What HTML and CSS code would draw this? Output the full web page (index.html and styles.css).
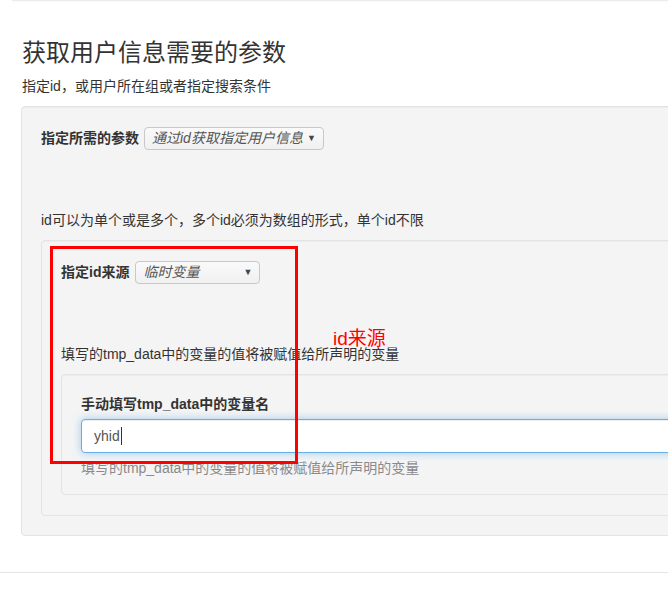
FILE: index.html
```html
<!DOCTYPE html>
<html lang="zh">
<head>
<meta charset="utf-8">
<link rel="stylesheet" href="styles.css">
</head>
<body>
<div class="topline"></div>
<div class="page">
  <h3 class="title">获取用户信息需要的参数</h3>
  <p class="subtitle">指定id，或用户所在组或者指定搜索条件</p>
  <div class="well">
    <div class="row-inline">
      <span class="lbl">指定所需的参数</span>
      <span class="select sel1"><span class="sel-text">通过id获取指定用户信息</span><span class="arrow">▼</span></span>
    </div>
    <p class="desc">id可以为单个或是多个，多个id必须为数组的形式，单个id不限</p>
    <div class="well well-mid">
      <div class="row-inline">
        <span class="lbl">指定id来源</span>
        <span class="select sel2"><span class="sel-text">临时变量</span><span class="arrow">▼</span></span>
      </div>
      <p class="desc">填写的tmp_data中的变量的值将被赋值给所声明的变量</p>
      <div class="well well-last">
        <div class="lbl block">手动填写tmp_data中的变量名</div>
        <div class="input"><span>yhid</span><span class="caret"></span></div>
        <div class="help">填写的tmp_data中的变量的值将被赋值给所声明的变量</div>
      </div>
    </div>
  </div>
</div>
<hr class="bottom-rule">
<div class="annot-box"></div>
<div class="annot-text">id来源</div>
</body>
</html>
```
FILE: styles.css
```css
html, body {
  margin: 0;
  padding: 0;
  background: #fff;
  overflow: hidden;
}
body {
  width: 668px;
  height: 597px;
  position: relative;
  font-family: "Liberation Sans", Arial, "Noto Sans CJK SC", sans-serif;
  font-size: 14px;
  line-height: 20px;
  color: #333;
}
.topline {
  height: 1px;
  margin-left: 12px;
  background: #ececec;
  box-shadow: 0 1px 2px rgba(0,0,0,0.04);
}
.page {
  width: 760px;
  padding-left: 21px;
  padding-top: 39px;
}
.title {
  margin: 0 0 10px 1px;
  font-size: 24px;
  font-weight: normal;
  line-height: 26px;
  color: #333;
}
.subtitle {
  margin: 0 0 10px 1px;
  font-size: 14px;
  line-height: 20px;
}
.well {
  background: #f4f4f4;
  border: 1px solid #e3e3e3;
  border-radius: 4px;
  padding: 19px;
  box-shadow: inset 0 1px 1px rgba(0,0,0,0.03);
}
.well-mid {
  padding-bottom: 20px;
}
.well-last {
  padding-bottom: 16px;
}
.row-inline {
  display: flex;
  align-items: center;
  height: 24px;
}
.lbl {
  font-weight: bold;
  color: #333;
  margin-right: 5px;
}
.lbl.block {
  display: block;
  margin-bottom: 5px;
}
.select {
  display: inline-flex;
  align-items: center;
  justify-content: space-between;
  box-sizing: border-box;
  height: 23px;
  border: 1px solid #c8c8c8;
  border-radius: 4px;
  background: linear-gradient(#fafafa, #f0f0f0);
  padding: 0 7px 0 7px;
  font-style: italic;
  color: #555;
  font-size: 14px;
}
.sel1 { width: 180px; }
.sel2 { width: 125px; margin-left: 1px; }
.arrow {
  font-style: normal;
  font-size: 9px;
  color: #444;
}
.desc {
  margin: 60px 0 10px 0;
}
.input {
  box-sizing: border-box;
  height: 34px;
  border: 1px solid #66afe9;
  border-radius: 4px;
  background: #fff;
  padding: 6px 12px;
  font-size: 14px;
  line-height: 20px;
  color: #555;
  display: flex;
  align-items: center;
  box-shadow: inset 0 1px 1px rgba(0,0,0,0.075), 0 0 8px rgba(102,175,233,0.6);
}
.caret {
  display: inline-block;
  width: 0;
  height: 18px;
  border-left: 1px solid #333;
  margin-left: 1px;
}
.help {
  margin-top: 5px;
  color: #8a8a8a;
}
.bottom-rule {
  margin: 36px 0 0 0;
  border: 0;
  border-top: 1px solid #e5e5e5;
}
.annot-box {
  position: absolute;
  left: 50px;
  top: 246px;
  width: 242px;
  height: 212px;
  border: 3px solid #ff0000;
}
.annot-text {
  position: absolute;
  left: 333px;
  top: 327px;
  font-size: 19px;
  line-height: 24px;
  color: #ff0000;
}
```
